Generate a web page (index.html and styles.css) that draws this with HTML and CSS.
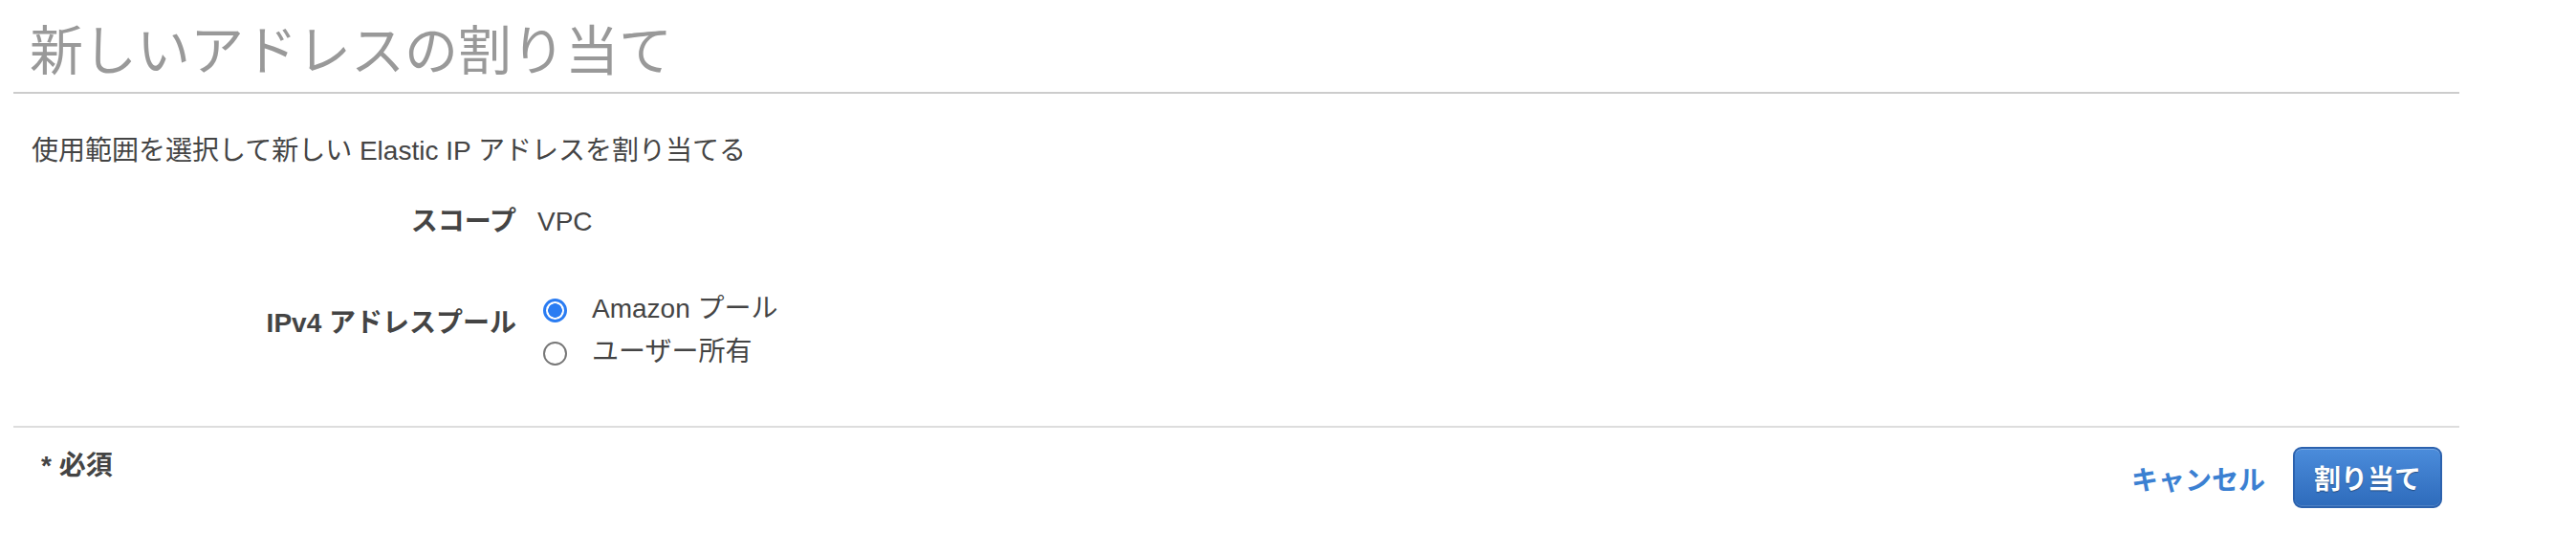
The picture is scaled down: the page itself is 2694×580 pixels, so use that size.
FILE: index.html
```html
<!DOCTYPE html>
<html lang="ja">
<head>
<meta charset="utf-8">
<title>新しいアドレスの割り当て</title>
<link rel="stylesheet" href="styles.css">
</head>
<body>
<div class="page">
  <h2 class="title">新しいアドレスの割り当て</h2>
  <p class="desc">使用範囲を選択して新しい Elastic IP アドレスを割り当てる</p>
  <div class="form">
    <div class="row row-scope">
      <div class="label">スコープ</div>
      <div class="value">VPC</div>
    </div>
    <div class="row row-pool">
      <div class="label label-pool">IPv4 アドレスプール</div>
      <div class="value options">
        <label class="option"><input type="radio" name="pool" class="radio" checked><span>Amazon プール</span></label>
        <label class="option"><input type="radio" name="pool" class="radio"><span>ユーザー所有</span></label>
      </div>
    </div>
  </div>
  <div class="footer">
    <div class="required">* 必須</div>
    <div class="actions">
      <a class="cancel" href="#">キャンセル</a>
      <button class="primary" type="button">割り当て</button>
    </div>
  </div>
</div>
</body>
</html>
```

FILE: styles.css
```css
html, body {
  margin: 0;
  padding: 0;
  background: #fff;
}
body {
  font-family: "Liberation Sans", "Noto Sans CJK JP", sans-serif;
  color: #444;
  font-size: 28px;
}
.page {
  margin-left: 14px;
  width: 2558px;
}
.title {
  margin: 0;
  padding: 24px 0 12px 17px;
  font-size: 56px;
  line-height: 60px;
  font-weight: normal;
  color: #999;
  border-bottom: 2px solid #ccc;
}
.desc {
  margin: 40px 0 0 0;
  padding-left: 19px;
  line-height: 40px;
  color: #444;
}
.form {
  padding-bottom: 57px;
  border-bottom: 2px solid #ddd;
}
.row {
  display: grid;
  grid-template-columns: 526px 1fr;
  column-gap: 22px;
  line-height: 40px;
}
.row-scope {
  margin-top: 34px;
}
.row-pool {
  margin-top: 51px;
}
.label {
  text-align: right;
  font-weight: bold;
  color: #444;
}
.label-pool {
  padding-top: 15px;
}
.value {
  color: #444;
}
.options {
  display: flex;
  flex-direction: column;
  gap: 5px;
}
.option {
  display: flex;
  align-items: center;
  height: 40px;
}
.radio {
  appearance: none;
  -webkit-appearance: none;
  margin: 2px 26px 0 6px;
  width: 25px;
  height: 25px;
  border-radius: 50%;
  border: 2px solid #777;
  background: #fff;
  box-sizing: border-box;
}
.radio:checked {
  border: 3px solid #2a7cf2;
  background: radial-gradient(circle, #2a7cf2 0 7px, #fff 7.6px);
}
.footer {
  display: flex;
  justify-content: space-between;
  align-items: flex-start;
  padding: 20px 18px 0 29px;
}
.required {
  font-weight: bold;
  line-height: 40px;
  color: #444;
}
.actions {
  display: flex;
  align-items: center;
  gap: 29px;
}
.cancel {
  color: #3b80d2;
  font-weight: bold;
  text-decoration: none;
  padding-top: 2px;
}
.primary {
  font-family: "Liberation Sans", "Noto Sans CJK JP", sans-serif;
  font-size: 28px;
  font-weight: bold;
  color: #fff;
  height: 64px;
  padding: 0 20px;
  border: 2px solid #2c62ae;
  border-radius: 9px;
  background: linear-gradient(#4b8cdb, #2e6bbb);
  box-shadow: inset 0 1px 0 rgba(255,255,255,0.25), inset 0 -1px 0 rgba(255,255,255,0.15);
  text-shadow: 0 1px 1px rgba(0,0,0,0.35);
}
```
